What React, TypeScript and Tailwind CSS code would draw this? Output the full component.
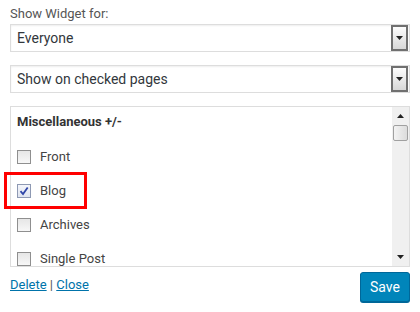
const Arrow = ({ up = false }: { up?: boolean }) => (
    <svg width="7" height="4" viewBox="0 0 7 4" className="block">
        <polygon points={up ? "0,4 7,4 3.5,0" : "0,0 7,0 3.5,4"} fill="#222" />
    </svg>
)

const Select = ({ label }: { label: string }) => {
    return (
        <div className="h-[28px] w-[400px] flex items-center border border-[#dddddd] bg-white shadow-[inset_0_1px_2px_rgba(0,0,0,0.07)] pr-[1px]">
            <span className="flex-1 pl-[6px] text-[14px] text-[#32373c]">{label}</span>
            {/* old style dropdown button */}
            <div className="w-[17px] h-[26px] border-2 border-[#707070] bg-gradient-to-b from-[#fdfdfd] to-[#d8d8d8] flex items-center justify-center">
                <Arrow />
            </div>
        </div>
    )
}

const Check = ({ label, checked = false }: { label: string; checked?: boolean }) => {
    return (
        <div className="h-[34px] flex items-center gap-[9px]">
            <div
                className={
                    checked
                        ? "w-[14px] h-[14px] border border-[#8e99b3] bg-gradient-to-b from-[#f4f6fb] to-[#dfe4ef] flex items-center justify-center"
                        : "w-[14px] h-[14px] border border-[#8f8f8f] bg-gradient-to-b from-[#e6e6e6] to-[#f7f7f7]"
                }
            >
                {checked && (
                    <svg width="10" height="10" viewBox="0 0 10 10">
                        <path d="M1.5 5.2 L4 8 L8.7 1.5" stroke="#3046a8" strokeWidth="1.8" fill="none" />
                    </svg>
                )}
            </div>
            <span className="text-[13px] text-[#444]">{label}</span>
        </div>
    )
}

const App = () => {
    return (
        <div className="relative w-[420px] h-[312px] bg-white px-[10px] pt-[6px] font-['Roboto',sans-serif]">
            <p className="text-[13px] leading-[16px] text-[#555] mb-[2px]">Show Widget for:</p>
            <Select label="Everyone" />
            <div className="h-[13px]" />
            <Select label="Show on checked pages" />
            {/* pages list */}
            <div className="mt-[13px] w-[400px] h-[161px] border border-[#dddddd] flex overflow-hidden">
                <div className="flex-1 pl-[6px] pt-[7px]">
                    <p className="text-[13px] leading-[16px] font-bold text-[#333]">Miscellaneous +/-</p>
                    <div className="mt-[10px]">
                        <Check label="Front" />
                        <Check label="Blog" checked />
                        <Check label="Archives" />
                        <Check label="Single Post" />
                    </div>
                </div>
                {/* scrollbar */}
                <div className="w-[17px] bg-[#f0f0f0] flex flex-col items-center">
                    <div className="h-[18px] flex items-center justify-center">
                        <Arrow up />
                    </div>
                    <div className="w-[15px] h-[16px] rounded-[2px] border border-[#a0a0a0] bg-gradient-to-r from-[#f3f3f3] to-[#dcdcdc]" />
                    <div className="flex-1" />
                    <div className="h-[18px] flex items-center justify-center">
                        <Arrow />
                    </div>
                </div>
            </div>
            <div className="mt-[5px] flex items-start justify-between">
                <div className="pt-[3px] text-[13px] text-[#555]">
                    <a className="text-[#0073aa] underline">Delete</a> | <a className="text-[#0073aa] underline">Close</a>
                </div>
                <button className="w-[50px] h-[30px] rounded-[3px] bg-[#0085ba] border border-[#006799] shadow-[0_1px_0_#006799] text-white text-[14px]">Save</button>
            </div>
            {/* highlight */}
            <div className="absolute left-[4px] top-[172px] w-[83px] h-[37px] border-[3px] border-[#ff0000]" />
        </div>
    )
}

export default App;
